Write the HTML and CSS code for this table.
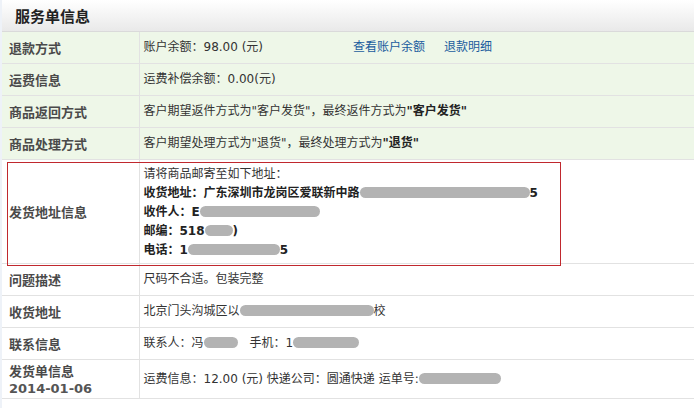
FILE: index.html
```html
<!DOCTYPE html>
<html lang="zh-CN">
<head>
    <meta charset="UTF-8">
    <title>服务单信息</title>
    <link rel="stylesheet" href="styles.css">
</head>
<body>
    <div class="panel">
        <div class="panel-title">服务单信息</div>
        <table class="info-table">
            <colgroup>
                <col class="col-label">
                <col>
            </colgroup>
            <tr class="row-green">
                <td class="label">退款方式</td>
                <td class="value">账户余额：98.00 (元)<span class="links"><a href="#">查看账户余额</a><a href="#">退款明细</a></span></td>
            </tr>
            <tr class="row-green">
                <td class="label">运费信息</td>
                <td class="value">运费补偿余额：0.00(元)</td>
            </tr>
            <tr class="row-green">
                <td class="label">商品返回方式</td>
                <td class="value">客户期望返件方式为"客户发货"，最终返件方式为<b>"客户发货"</b></td>
            </tr>
            <tr class="row-green">
                <td class="label">商品处理方式</td>
                <td class="value">客户期望处理方式为"退货"，最终处理方式为<b>"退货"</b></td>
            </tr>
            <tr class="row-address">
                <td class="label">发货地址信息</td>
                <td class="value address">
                    请将商品邮寄至如下地址：<br>
                    <b>收货地址：广东深圳市龙岗区爱联新中路</b><span class="blur" style="width: 170px"></span><b>5</b><br>
                    <b>收件人：E</b><span class="blur" style="width: 120px"></span><br>
                    <b>邮编：518</b><span class="blur" style="width: 28px"></span><b>)</b><br>
                    <b>电话：1</b><span class="blur" style="width: 92px"></span><b>5</b>
                </td>
            </tr>
            <tr>
                <td class="label">问题描述</td>
                <td class="value">尺码不合适。包装完整</td>
            </tr>
            <tr>
                <td class="label">收货地址</td>
                <td class="value">北京门头沟城区以<span class="blur" style="width: 134px"></span>校</td>
            </tr>
            <tr>
                <td class="label">联系信息</td>
                <td class="value">联系人：冯<span class="blur" style="width: 34px"></span>　手机：1<span class="blur" style="width: 66px"></span></td>
            </tr>
            <tr class="row-last">
                <td class="label">发货单信息<br><span class="date">2014-01-06</span></td>
                <td class="value">运费信息：12.00 (元) 快递公司：圆通快递 运单号:<span class="blur" style="width: 82px"></span></td>
            </tr>
        </table>
        <div class="highlight"></div>
    </div>
</body>
</html>
```

FILE: styles.css
```css
body {
    margin: 0;
    background-color: #eef2f8;
    font-family: "DejaVu Sans", "Noto Sans CJK SC", sans-serif;
    font-size: 12px;
    color: #333;
}
.panel {
    position: relative;
    margin-left: 2px;
    height: 408px;
    background-color: #fff;
}
.panel-title {
    height: 31px;
    line-height: 31px;
    padding-left: 13px;
    font-family: "Noto Sans CJK SC", sans-serif;
    font-size: 15px;
    font-weight: bold;
    color: #222;
    background: linear-gradient(#ffffff, #e9e9e9);
    border-bottom: 1px solid #dadada;
}
.info-table {
    width: 100%;
    border-collapse: collapse;
    table-layout: fixed;
}
.col-label {
    width: 137px;
}
.info-table td {
    height: 31px;
    padding: 0;
    border-bottom: 1px solid #e2e2e2;
    vertical-align: middle;
    line-height: 19px;
}
.row-green td {
    background-color: #eef7e8;
}
.label {
    padding-left: 7px !important;
    border-right: 1px solid #e2e2e2;
    font-family: "Noto Sans CJK SC", sans-serif;
    font-size: 13px;
    font-weight: bold;
    color: #4a4a4a;
}
.value {
    padding-left: 4px !important;
}
.value b {
    font-weight: bold;
    color: #222;
}
.links {
    margin-left: 90px;
}
.links a {
    color: #1a5c9e;
    text-decoration: none;
    margin-right: 19px;
}
.row-address td {
    height: 95px;
}
.address {
    padding-top: 5px !important;
    padding-bottom: 3px !important;
}
.row-last td {
    height: 38px;
    line-height: 17px;
}
.date {
    font-family: "DejaVu Sans", sans-serif;
    color: #555;
}
.blur {
    display: inline-block;
    height: 11px;
    border-radius: 6px;
    background-color: #b3b3b3;
    vertical-align: -1px;
}
.highlight {
    position: absolute;
    left: 5px;
    top: 162px;
    width: 552px;
    height: 102px;
    border: 1px solid #c0282e;
}
```
